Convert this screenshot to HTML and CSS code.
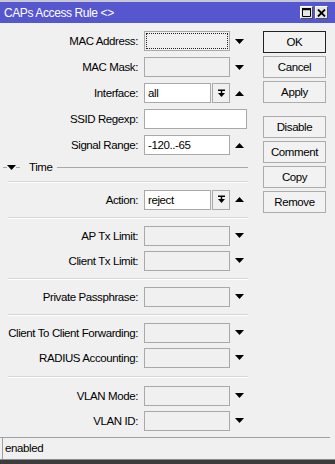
FILE: index.html
```html
<!DOCTYPE html>
<html lang="en">

<head>
    <meta charset="UTF-8" />
    <meta name="viewport" content="width=device-width, initial-scale=1.0" />
    <title>CAPs Access Rule</title>
    <link rel="stylesheet" href="styles.css">
</head>

<body>
    <div class="window">
        <div class="titlebar">
            <span class="title">CAPs Access Rule &lt;&gt;</span>
            <span class="tbtn">
                <svg width="9" height="9" viewBox="0 0 9 9"><path d="M0.5 0.5h8v8h-8z M0.5 1.5h8" fill="none" stroke="#000" stroke-width="1"/><rect x="0" y="0" width="9" height="2.2" fill="#000"/></svg>
            </span>
            <span class="tbtn">
                <svg width="9" height="8" viewBox="0 0 9 8"><path d="M1 0.5l7 7 M8 0.5l-7 7" stroke="#000" stroke-width="1.8"/></svg>
            </span>
        </div>

        <div class="content">
            <div class="form">
                <div class="row tall">
                    <label class="label">MAC Address:</label>
                    <div class="field focus"></div>
                    <svg class="arrow" width="9" height="5" viewBox="0 0 9 5"><polygon points="0,0 9,0 4.5,5" /></svg>
                </div>
                <div class="row tall">
                    <label class="label">MAC Mask:</label>
                    <div class="field"></div>
                    <svg class="arrow" width="9" height="5" viewBox="0 0 9 5"><polygon points="0,0 9,0 4.5,5" /></svg>
                </div>
                <div class="row tall">
                    <label class="label">Interface:</label>
                    <div class="field white combo">all</div>
                    <div class="drop-btn">
                        <svg width="9" height="9" viewBox="0 0 9 9"><path d="M1 0.5h7v1.5H1z M3.8 2h1.4v2H3.8z M1 4h7L4.5 8z" /></svg>
                    </div>
                    <svg class="arrow" width="9" height="5" viewBox="0 0 9 5"><polygon points="0,5 9,5 4.5,0" /></svg>
                </div>
                <div class="row tall">
                    <label class="label">SSID Regexp:</label>
                    <div class="field white wide"></div>
                </div>
                <div class="row tall">
                    <label class="label">Signal Range:</label>
                    <div class="field white">-120..-65</div>
                    <svg class="arrow" width="9" height="5" viewBox="0 0 9 5"><polygon points="0,5 9,5 4.5,0" /></svg>
                </div>

                <div class="group-head">
                    <span class="hline short"></span>
                    <svg width="9" height="5" viewBox="0 0 9 5"><polygon points="0,0 9,0 4.5,5" /></svg>
                    <span class="hline short"></span>
                    <span class="group-name">Time</span>
                    <span class="hline long"></span>
                </div>

                <div class="sep"></div>

                <div class="row">
                    <label class="label">Action:</label>
                    <div class="field white combo">reject</div>
                    <div class="drop-btn">
                        <svg width="9" height="9" viewBox="0 0 9 9"><path d="M1 0.5h7v1.5H1z M3.8 2h1.4v2H3.8z M1 4h7L4.5 8z" /></svg>
                    </div>
                    <svg class="arrow" width="9" height="5" viewBox="0 0 9 5"><polygon points="0,5 9,5 4.5,0" /></svg>
                </div>

                <div class="sep"></div>

                <div class="row">
                    <label class="label">AP Tx Limit:</label>
                    <div class="field"></div>
                    <svg class="arrow" width="9" height="5" viewBox="0 0 9 5"><polygon points="0,0 9,0 4.5,5" /></svg>
                </div>
                <div class="row">
                    <label class="label">Client Tx Limit:</label>
                    <div class="field"></div>
                    <svg class="arrow" width="9" height="5" viewBox="0 0 9 5"><polygon points="0,0 9,0 4.5,5" /></svg>
                </div>

                <div class="sep"></div>

                <div class="row">
                    <label class="label">Private Passphrase:</label>
                    <div class="field"></div>
                    <svg class="arrow" width="9" height="5" viewBox="0 0 9 5"><polygon points="0,0 9,0 4.5,5" /></svg>
                </div>

                <div class="sep"></div>

                <div class="row">
                    <label class="label">Client To Client Forwarding:</label>
                    <div class="field"></div>
                    <svg class="arrow" width="9" height="5" viewBox="0 0 9 5"><polygon points="0,0 9,0 4.5,5" /></svg>
                </div>
                <div class="row">
                    <label class="label">RADIUS Accounting:</label>
                    <div class="field"></div>
                    <svg class="arrow" width="9" height="5" viewBox="0 0 9 5"><polygon points="0,0 9,0 4.5,5" /></svg>
                </div>

                <div class="sep last"></div>

                <div class="row">
                    <label class="label">VLAN Mode:</label>
                    <div class="field"></div>
                    <svg class="arrow" width="9" height="5" viewBox="0 0 9 5"><polygon points="0,0 9,0 4.5,5" /></svg>
                </div>
                <div class="row">
                    <label class="label">VLAN ID:</label>
                    <div class="field"></div>
                    <svg class="arrow" width="9" height="5" viewBox="0 0 9 5"><polygon points="0,0 9,0 4.5,5" /></svg>
                </div>
            </div>

            <div class="buttons">
                <button class="btn default">OK</button>
                <button class="btn">Cancel</button>
                <button class="btn">Apply</button>
                <button class="btn spaced">Disable</button>
                <button class="btn">Comment</button>
                <button class="btn">Copy</button>
                <button class="btn">Remove</button>
            </div>
        </div>

        <div class="statusbar">
            <div class="status-cell">enabled</div>
        </div>
        <div class="frame-bottom"></div>
    </div>
</body>

</html>
```

FILE: styles.css
```css
* {
    box-sizing: border-box;
    margin: 0;
    padding: 0;
}

body {
    width: 335px;
    height: 464px;
    overflow: hidden;
    font-family: 'Liberation Sans', Arial, sans-serif;
    font-size: 11.5px;
    letter-spacing: -0.4px;
    color: #000;
    background: #f0f0f0;
}

.window {
    display: flex;
    flex-direction: column;
    height: 464px;
    border-top: 2px solid #c8c8d4;
}

.titlebar {
    height: 21px;
    display: flex;
    align-items: center;
    padding: 0 7px 0 4px;
    background: #5656cf;
    color: #fff;
    font-size: 12px;
}

.title {
    flex: 1;
}

.tbtn {
    width: 13px;
    height: 13px;
    margin-left: 2px;
    display: flex;
    align-items: center;
    justify-content: center;
    background: #e6e6e6;
    border: 1px solid;
    border-color: #fff #505050 #505050 #fff;
}

.content {
    flex: 1;
    display: flex;
    padding-top: 5px;
}

.form {
    width: 250px;
}

.row {
    height: 25px;
    display: flex;
    align-items: center;
}

.row.tall {
    height: 26px;
}

.label {
    width: 138px;
    margin-right: 6px;
    text-align: right;
    white-space: nowrap;
}

.field {
    width: 86px;
    height: 20px;
    padding: 0 3px;
    line-height: 18px;
    border: 1px solid #a9a9a9;
    background: #f0f0f0;
}

.field.white {
    background: #fff;
}

.field.wide {
    width: 103px;
}

.field.combo {
    width: 67px;
}

.field.focus {
    outline: 1px dotted #222;
    outline-offset: -3px;
}

.drop-btn {
    width: 18px;
    height: 20px;
    margin-left: 1px;
    display: flex;
    align-items: center;
    justify-content: center;
    border: 1px solid #a9a9a9;
    background: #f0f0f0;
}

.arrow {
    margin-left: 5px;
}

.group-head {
    height: 18px;
    display: flex;
    align-items: center;
    padding: 0 2px 0 3px;
}

.hline {
    height: 1px;
    background: #a8a8a8;
}

.hline.short {
    width: 4px;
}

.hline.long {
    flex: 1;
}

.group-name {
    margin: 0 4px 0 9px;
}

.sep {
    margin: 5px 2px 4px 8px;
    border-top: 1px solid #d6d6d6;
    border-bottom: 1px solid #fff;
}

.sep.last {
    margin: 6px 2px 5px 8px;
}

.buttons {
    width: 63px;
    margin-left: 13px;
    padding-top: 3px;
    display: flex;
    flex-direction: column;
    gap: 3px;
}

.btn {
    height: 22px;
    font-family: inherit;
    font-size: 11.5px;
    letter-spacing: -0.4px;
    color: #000;
    background: #f2f2f2;
    border: 1px solid #acacac;
}

.btn.default {
    border-color: #222;
}

.btn.spaced {
    margin-top: 10px;
}

.statusbar {
    height: 22px;
    margin-right: 5px;
    padding-left: 2px;
    border-top: 1px solid #a0a0a0;
}

.status-cell {
    height: 100%;
    padding-left: 2px;
    line-height: 20px;
    border-left: 1px solid #a0a0a0;
}

.frame-bottom {
    height: 5px;
    background: #3c3c3c;
    border-top: 1px solid #8c8c8c;
}
```
